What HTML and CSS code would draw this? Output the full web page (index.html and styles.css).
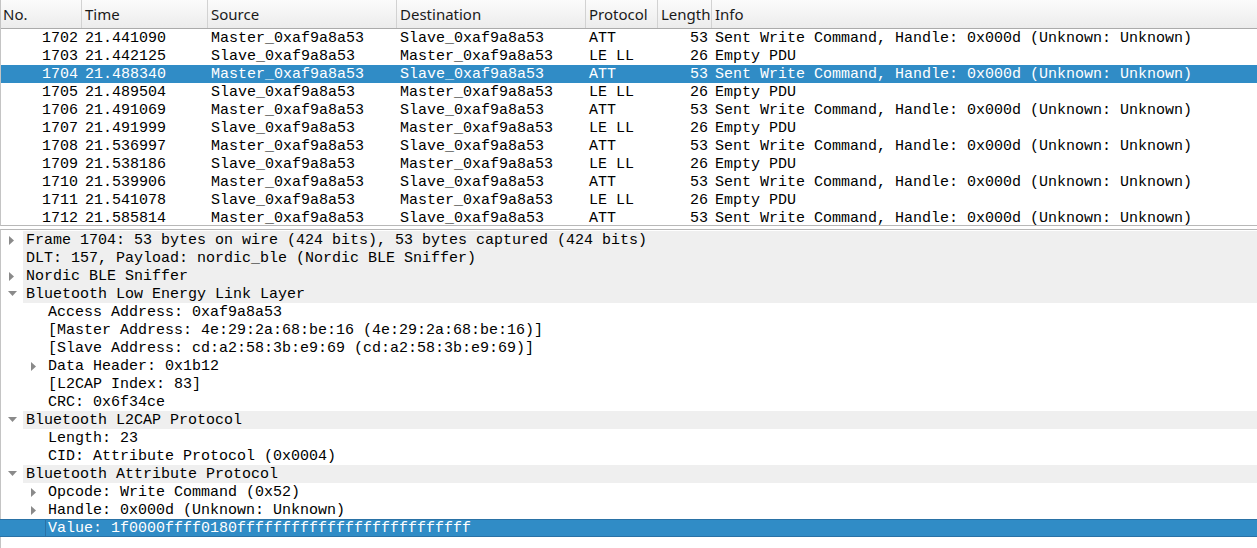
FILE: index.html
```html
<!DOCTYPE html>
<html>
<head>
<meta charset="utf-8">
<link rel="stylesheet" href="styles.css">
</head>
<body>
<div class="app">
  <div class="plist">
    <div class="phead">
      <div class="hc c-no">No.</div>
      <div class="hc c-time">Time</div>
      <div class="hc c-src">Source</div>
      <div class="hc c-dst">Destination</div>
      <div class="hc c-proto">Protocol</div>
      <div class="hc c-len">Length</div>
      <div class="hc c-info">Info</div>
    </div>
    <div class="pbody">
      <div class="prow"><span class="c-no">1702</span><span class="c-time">21.441090</span><span class="c-src">Master_0xaf9a8a53</span><span class="c-dst">Slave_0xaf9a8a53</span><span class="c-proto">ATT</span><span class="c-len">53</span><span class="c-info">Sent Write Command, Handle: 0x000d (Unknown: Unknown)</span></div>
      <div class="prow"><span class="c-no">1703</span><span class="c-time">21.442125</span><span class="c-src">Slave_0xaf9a8a53</span><span class="c-dst">Master_0xaf9a8a53</span><span class="c-proto">LE LL</span><span class="c-len">26</span><span class="c-info">Empty PDU</span></div>
      <div class="prow sel"><span class="c-no">1704</span><span class="c-time">21.488340</span><span class="c-src">Master_0xaf9a8a53</span><span class="c-dst">Slave_0xaf9a8a53</span><span class="c-proto">ATT</span><span class="c-len">53</span><span class="c-info">Sent Write Command, Handle: 0x000d (Unknown: Unknown)</span></div>
      <div class="prow"><span class="c-no">1705</span><span class="c-time">21.489504</span><span class="c-src">Slave_0xaf9a8a53</span><span class="c-dst">Master_0xaf9a8a53</span><span class="c-proto">LE LL</span><span class="c-len">26</span><span class="c-info">Empty PDU</span></div>
      <div class="prow"><span class="c-no">1706</span><span class="c-time">21.491069</span><span class="c-src">Master_0xaf9a8a53</span><span class="c-dst">Slave_0xaf9a8a53</span><span class="c-proto">ATT</span><span class="c-len">53</span><span class="c-info">Sent Write Command, Handle: 0x000d (Unknown: Unknown)</span></div>
      <div class="prow"><span class="c-no">1707</span><span class="c-time">21.491999</span><span class="c-src">Slave_0xaf9a8a53</span><span class="c-dst">Master_0xaf9a8a53</span><span class="c-proto">LE LL</span><span class="c-len">26</span><span class="c-info">Empty PDU</span></div>
      <div class="prow"><span class="c-no">1708</span><span class="c-time">21.536997</span><span class="c-src">Master_0xaf9a8a53</span><span class="c-dst">Slave_0xaf9a8a53</span><span class="c-proto">ATT</span><span class="c-len">53</span><span class="c-info">Sent Write Command, Handle: 0x000d (Unknown: Unknown)</span></div>
      <div class="prow"><span class="c-no">1709</span><span class="c-time">21.538186</span><span class="c-src">Slave_0xaf9a8a53</span><span class="c-dst">Master_0xaf9a8a53</span><span class="c-proto">LE LL</span><span class="c-len">26</span><span class="c-info">Empty PDU</span></div>
      <div class="prow"><span class="c-no">1710</span><span class="c-time">21.539906</span><span class="c-src">Master_0xaf9a8a53</span><span class="c-dst">Slave_0xaf9a8a53</span><span class="c-proto">ATT</span><span class="c-len">53</span><span class="c-info">Sent Write Command, Handle: 0x000d (Unknown: Unknown)</span></div>
      <div class="prow"><span class="c-no">1711</span><span class="c-time">21.541078</span><span class="c-src">Slave_0xaf9a8a53</span><span class="c-dst">Master_0xaf9a8a53</span><span class="c-proto">LE LL</span><span class="c-len">26</span><span class="c-info">Empty PDU</span></div>
      <div class="prow"><span class="c-no">1712</span><span class="c-time">21.585814</span><span class="c-src">Master_0xaf9a8a53</span><span class="c-dst">Slave_0xaf9a8a53</span><span class="c-proto">ATT</span><span class="c-len">53</span><span class="c-info">Sent Write Command, Handle: 0x000d (Unknown: Unknown)</span></div>
    </div>
  </div>
  <div class="splitter"></div>
  <div class="tree">
    <div class="node top"><span class="tw"><svg class="ar" width="6" height="9" viewBox="0 0 6 9"><polygon points="0,0 5,4.5 0,9"/></svg></span><span class="lbl">Frame 1704: 53 bytes on wire (424 bits), 53 bytes captured (424 bits)</span></div>
    <div class="node top"><span class="tw"></span><span class="lbl">DLT: 157, Payload: nordic_ble (Nordic BLE Sniffer)</span></div>
    <div class="node top"><span class="tw"><svg class="ar" width="6" height="9" viewBox="0 0 6 9"><polygon points="0,0 5,4.5 0,9"/></svg></span><span class="lbl">Nordic BLE Sniffer</span></div>
    <div class="node top"><span class="tw"><svg class="ar" width="9" height="6" viewBox="0 0 9 6"><polygon points="0,0 9,0 4.5,5"/></svg></span><span class="lbl">Bluetooth Low Energy Link Layer</span></div>
    <div class="node child"><span class="tw"></span><span class="lbl">Access Address: 0xaf9a8a53</span></div>
    <div class="node child"><span class="tw"></span><span class="lbl">[Master Address: 4e:29:2a:68:be:16 (4e:29:2a:68:be:16)]</span></div>
    <div class="node child"><span class="tw"></span><span class="lbl">[Slave Address: cd:a2:58:3b:e9:69 (cd:a2:58:3b:e9:69)]</span></div>
    <div class="node child"><span class="tw"><svg class="ar" width="6" height="9" viewBox="0 0 6 9"><polygon points="0,0 5,4.5 0,9"/></svg></span><span class="lbl">Data Header: 0x1b12</span></div>
    <div class="node child"><span class="tw"></span><span class="lbl">[L2CAP Index: 83]</span></div>
    <div class="node child"><span class="tw"></span><span class="lbl">CRC: 0x6f34ce</span></div>
    <div class="node top"><span class="tw"><svg class="ar" width="9" height="6" viewBox="0 0 9 6"><polygon points="0,0 9,0 4.5,5"/></svg></span><span class="lbl">Bluetooth L2CAP Protocol</span></div>
    <div class="node child"><span class="tw"></span><span class="lbl">Length: 23</span></div>
    <div class="node child"><span class="tw"></span><span class="lbl">CID: Attribute Protocol (0x0004)</span></div>
    <div class="node top"><span class="tw"><svg class="ar" width="9" height="6" viewBox="0 0 9 6"><polygon points="0,0 9,0 4.5,5"/></svg></span><span class="lbl">Bluetooth Attribute Protocol</span></div>
    <div class="node child"><span class="tw"><svg class="ar" width="6" height="9" viewBox="0 0 6 9"><polygon points="0,0 5,4.5 0,9"/></svg></span><span class="lbl">Opcode: Write Command (0x52)</span></div>
    <div class="node child"><span class="tw"><svg class="ar" width="6" height="9" viewBox="0 0 6 9"><polygon points="0,0 5,4.5 0,9"/></svg></span><span class="lbl">Handle: 0x000d (Unknown: Unknown)</span></div>
    <div class="node child sel"><span class="tw"></span><span class="lbl">Value: 1f0000ffff0180ffffffffffffffffffffffffff</span></div>
  </div>
</div>
</body>
</html>
```

FILE: styles.css
```css
* { box-sizing: border-box; }
html, body { margin: 0; padding: 0; background: #ffffff; }
body { width: 1257px; height: 548px; overflow: hidden; }
.app { display: flex; flex-direction: column; height: 548px; }

.plist {
  height: 226px;
  border-left: 1px solid #c4c4c4;
  border-bottom: 1px solid #b8b8b8;
  overflow: hidden;
  flex: none;
}
.phead {
  display: flex;
  height: 29px;
  background: linear-gradient(#fbfbfb, #ececec);
  border-bottom: 1px solid #ababab;
  font-family: "Noto Sans", sans-serif;
  font-size: 15px;
  color: #1a1a1a;
  margin-left: -1px;
}
.hc {
  display: flex;
  align-items: center;
  padding: 0 0 0 3px;
  border-right: 1px solid #d2d2d2;
  white-space: nowrap;
  overflow: hidden;
}
.hc.c-info { border-right: none; }

.c-no { width: 82px; flex: none; }
.c-time { width: 126px; flex: none; }
.c-src { width: 189px; flex: none; }
.c-dst { width: 189px; flex: none; }
.c-proto { width: 72px; flex: none; }
.c-len { width: 54px; flex: none; }
.c-info { flex: 1; }

.pbody {
  font-family: "Liberation Mono", monospace;
  font-size: 15px;
  color: #000;
  margin-left: -1px;
}
.prow {
  display: flex;
  height: 18px;
  line-height: 20px;
  white-space: nowrap;
  overflow: hidden;
}
.prow span { padding-left: 3px; overflow: hidden; }
.prow .c-no, .prow .c-len { text-align: right; padding-left: 0; padding-right: 4px; }
.prow.sel { background: #308cc6; color: #ffffff; }

.splitter { height: 3px; flex: none; }

.tree {
  flex: 1;
  border-left: 1px solid #c4c4c4;
  border-top: 1px solid #b8b8b8;
  padding-top: 1px;
  font-family: "Liberation Mono", monospace;
  font-size: 15px;
  color: #000;
}
.node {
  display: flex;
  height: 18px;
  line-height: 20px;
  white-space: nowrap;
  overflow: hidden;
}
.tw {
  width: 22px;
  flex: none;
  display: flex;
  align-items: center;
  justify-content: center;
}
.ar { fill: #8a8a8a; display: block; }
.lbl { flex: 1; padding-left: 3px; }
.node.top .lbl { background: #efefef; }
.node.child { padding-left: 22px; }
.node.sel {
  background: #308cc6;
  color: #ffffff;
  border-top: 1px solid #2a72a6;
  border-bottom: 1px solid #2a72a6;
  line-height: 18px;
  margin-left: -1px;
  padding-left: 23px;
}
.node.sel .lbl { border-left: 1px solid #2a72a6; padding-left: 2px; margin-left: 0; }
```
